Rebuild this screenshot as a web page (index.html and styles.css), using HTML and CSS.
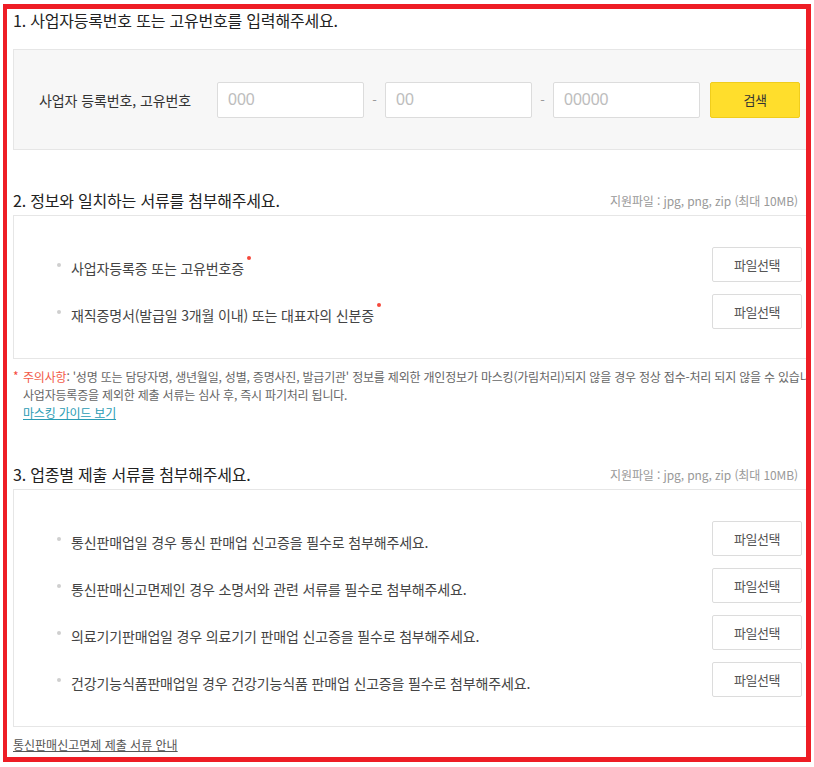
FILE: index.html
```html
<!DOCTYPE html>
<html lang="ko">
<head>
<meta charset="utf-8">
<title>서류 제출</title>
<link rel="stylesheet" href="styles.css">
</head>
<body>
<div class="frame">
  <div class="content">
    <h2 class="title title-first">1. 사업자등록번호 또는 고유번호를 입력해주세요.</h2>
    <div class="search-box">
      <span class="search-label">사업자 등록번호, 고유번호</span>
      <input class="num-input" type="text" placeholder="000">
      <span class="dash">-</span>
      <input class="num-input" type="text" placeholder="00">
      <span class="dash">-</span>
      <input class="num-input" type="text" placeholder="00000">
      <button class="search-btn" type="button">검색</button>
    </div>

    <div class="title-row">
      <h2 class="title">2. 정보와 일치하는 서류를 첨부해주세요.</h2>
      <span class="hint">지원파일 : jpg, png, zip (최대 10MB)</span>
    </div>
    <ul class="file-box">
      <li class="file-row"><span class="file-name">사업자등록증 또는 고유번호증<span class="req"></span></span><button class="file-btn" type="button">파일선택</button></li>
      <li class="file-row"><span class="file-name">재직증명서(발급일 3개월 이내) 또는 대표자의 신분증<span class="req"></span></span><button class="file-btn" type="button">파일선택</button></li>
    </ul>

    <div class="notice">
      <p class="notice-line"><span class="star">*</span><span class="warn">주의사항</span>: '성명 또는 담당자명, 생년월일, 성별, 증명사진, 발급기관' 정보를 제외한 개인정보가 마스킹(가림처리)되지 않을 경우 정상 접수-처리 되지 않을 수 있습니다.</p>
      <p class="notice-line">사업자등록증을 제외한 제출 서류는 심사 후, 즉시 파기처리 됩니다.</p>
      <p class="notice-line"><a class="guide-link" href="#">마스킹 가이드 보기</a></p>
    </div>

    <div class="title-row title-row-3">
      <h2 class="title">3. 업종별 제출 서류를 첨부해주세요.</h2>
      <span class="hint">지원파일 : jpg, png, zip (최대 10MB)</span>
    </div>
    <ul class="file-box">
      <li class="file-row"><span class="file-name">통신판매업일 경우 통신 판매업 신고증을 필수로 첨부해주세요.</span><button class="file-btn" type="button">파일선택</button></li>
      <li class="file-row"><span class="file-name">통신판매신고면제인 경우 소명서와 관련 서류를 필수로 첨부해주세요.</span><button class="file-btn" type="button">파일선택</button></li>
      <li class="file-row"><span class="file-name">의료기기판매업일 경우 의료기기 판매업 신고증을 필수로 첨부해주세요.</span><button class="file-btn" type="button">파일선택</button></li>
      <li class="file-row"><span class="file-name">건강기능식품판매업일 경우 건강기능식품 판매업 신고증을 필수로 첨부해주세요.</span><button class="file-btn" type="button">파일선택</button></li>
    </ul>

    <a class="footer-link" href="#">통신판매신고면제 제출 서류 안내</a>
  </div>
</div>
</body>
</html>
```

FILE: styles.css
```css
* { box-sizing: border-box; }
html, body { margin: 0; padding: 0; background: #fff; }
body {
  font-family: "Noto Sans CJK KR", "Noto Sans", sans-serif;
  color: #333;
}
.frame {
  margin: 4px 0 0 3px;
  width: 808px;
  height: 758px;
  border: 5px solid #ee1d25;
  border-left-width: 4px;
  overflow: hidden;
}
.content {
  width: 800px;
  margin-left: 6px;
}
.title {
  margin: 0;
  font-size: 16px;
  font-weight: 400;
  line-height: 22px;
  letter-spacing: -0.2px;
  color: #222;
}
.title-first { margin-bottom: 18px; }
.search-box {
  display: flex;
  align-items: center;
  height: 101px;
  background: #f7f7f7;
  border: 1px solid #e6e6e6;
  padding: 0 12px 0 25px;
}
.search-label {
  width: 178px;
  font-size: 14px;
  letter-spacing: -0.1px;
  color: #333;
}
.num-input {
  width: 147px;
  height: 36px;
  border: 1px solid #dcdcdc;
  border-radius: 2px;
  background: #fff;
  padding: 0 10px;
  font-family: "Liberation Sans Narrow", "Liberation Sans", Arial, sans-serif;
  font-size: 16px;
  color: #333;
  outline: none;
}
.num-input::placeholder { color: #bdbdbd; }
.dash {
  width: 21px;
  text-align: center;
  font-size: 13px;
  color: #999;
}
.search-btn {
  margin-left: 10px;
  width: 90px;
  height: 36px;
  background: #ffde2c;
  border: 1px solid #f0cd1c;
  border-radius: 2px;
  font-family: inherit;
  font-size: 13px;
  letter-spacing: -0.5px;
  color: #333;
  padding: 0;
}
.title-row {
  display: flex;
  justify-content: space-between;
  align-items: center;
  margin-top: 39px;
  margin-bottom: 4px;
}
.title-row-3 { margin-top: 41px; }
.hint {
  font-size: 12px;
  letter-spacing: -0.1px;
  color: #999;
  margin-right: 15px;
}
.file-box {
  list-style: none;
  margin: 0;
  border: 1px solid #e6e6e6;
  padding: 31px 10px 29px 43px;
  display: flex;
  flex-direction: column;
  gap: 12px;
}
.file-row {
  display: flex;
  align-items: center;
  font-size: 14px;
  letter-spacing: -0.15px;
  color: #444;
  line-height: 20px;
}
.file-row::before {
  content: "";
  width: 4px;
  height: 4px;
  border-radius: 50%;
  background: #cfcfcf;
  margin-right: 10px;
  flex: none;
}
.file-name { flex: 1; padding-top: 6px; }
.req {
  display: inline-block;
  width: 4px;
  height: 4px;
  border-radius: 50%;
  background: #f5483b;
  vertical-align: top;
  margin-left: 3px;
  margin-top: -2px;
}
.file-btn {
  width: 90px;
  height: 35px;
  background: #fff;
  border: 1px solid #dcdcdc;
  border-radius: 2px;
  font-family: inherit;
  font-size: 13px;
  letter-spacing: -0.5px;
  color: #555;
  padding: 0;
  flex: none;
}
.notice {
  margin-top: 9px;
  font-size: 12px;
  letter-spacing: -0.2px;
  line-height: 18px;
  color: #666;
}
.notice-line {
  margin: 0;
  padding-left: 10px;
  white-space: nowrap;
  position: relative;
}
.star {
  position: absolute;
  left: 0;
  top: -1px;
  color: #f5483b;
}
.warn { color: #f25a48; }
.guide-link {
  color: #2b9cb4;
  text-decoration: underline;
}
.footer-link {
  display: block;
  margin-top: 9px;
  font-size: 12px;
  line-height: 18px;
  color: #555;
  text-decoration: underline;
}
```
